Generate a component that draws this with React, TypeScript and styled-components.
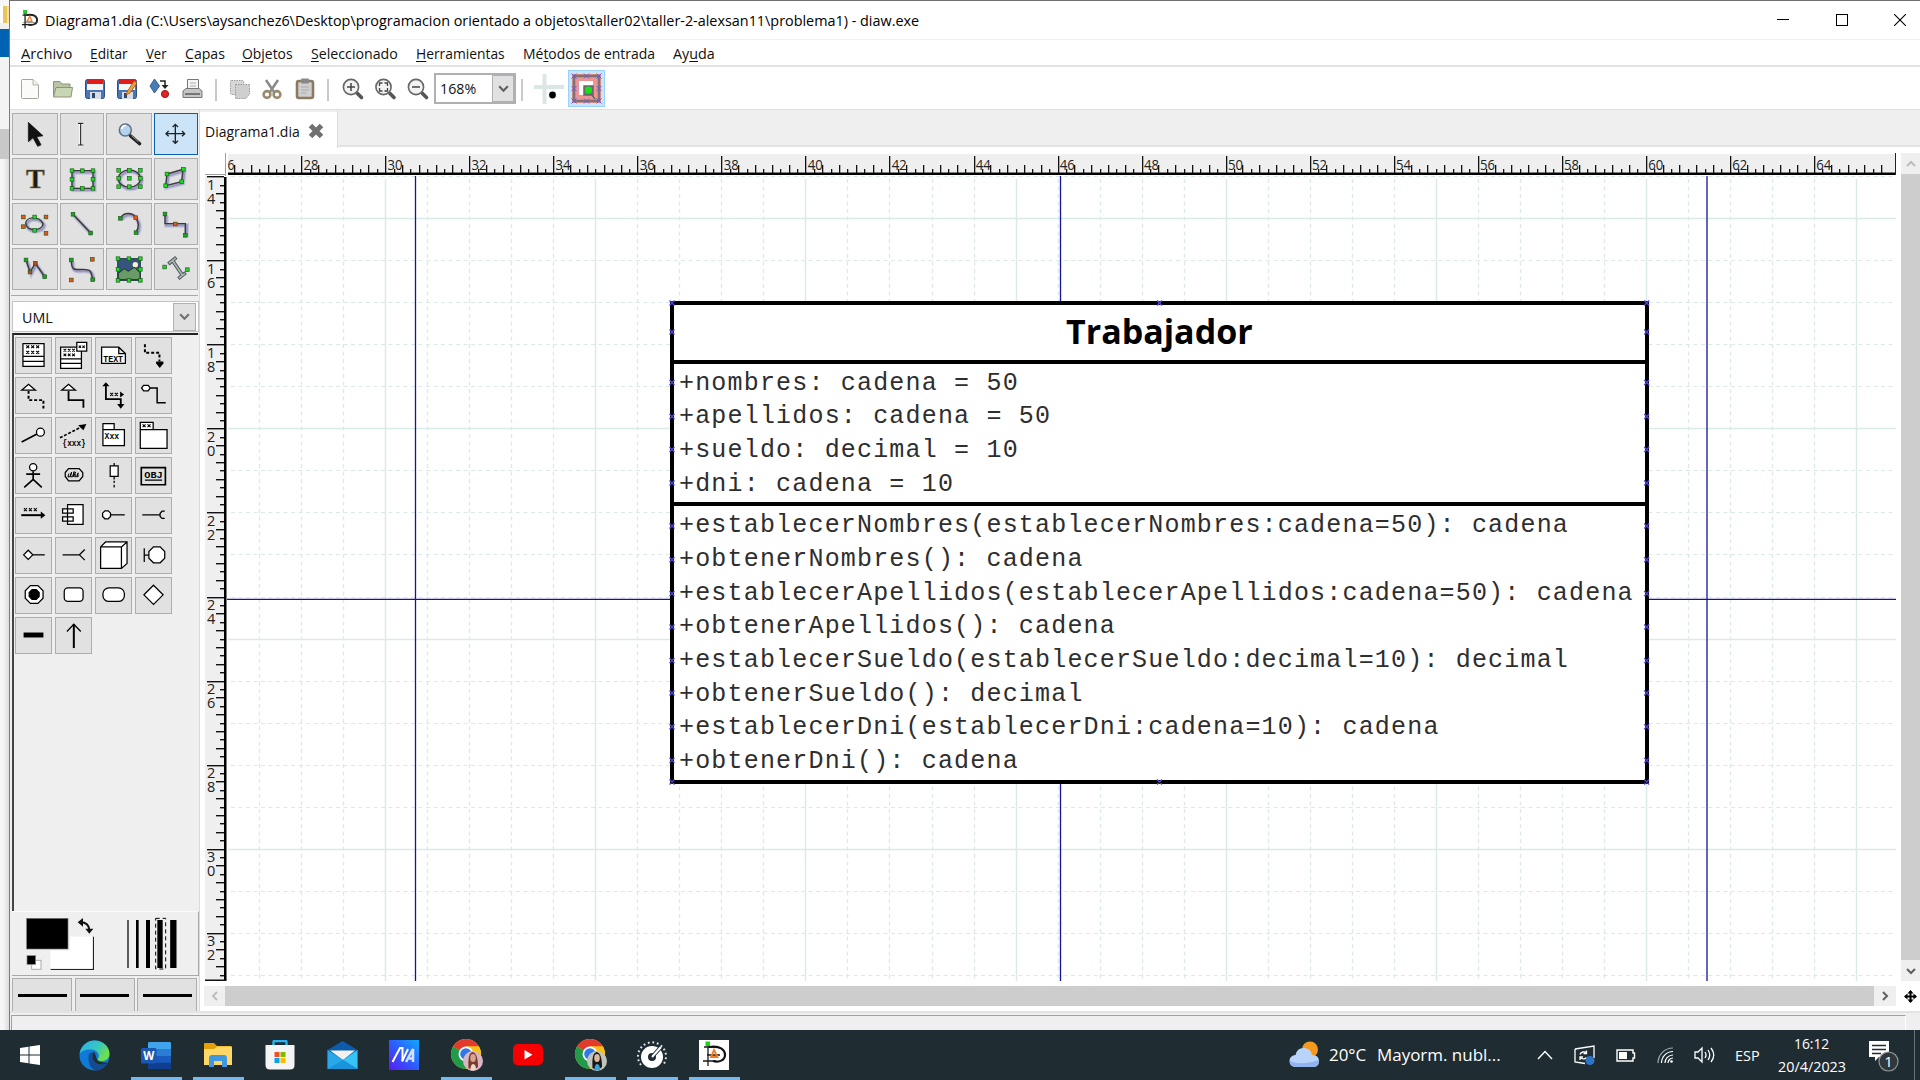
import React, { useLayoutEffect, useRef, useState } from "react";
import styled, { createGlobalStyle } from "styled-components";

const GlobalStyle = createGlobalStyle`
  * { box-sizing: border-box; }
  body { margin: 0; background: #fff; font-family: "Segoe UI", "Open Sans", "Noto Sans", sans-serif; overflow: hidden; }
  svg { display: block; }
`;

/* ---------- text squeezed to a known width ---------- */
const FitBox = styled.span<{ $w: number; $size: number; $bold?: boolean; $color?: string }>`
  display: block;
  width: ${(p) => p.$w}px;
  font-size: ${(p) => p.$size}px;
  line-height: ${(p) => Math.round(p.$size * 1.34)}px;
  font-weight: ${(p) => (p.$bold ? 700 : 400)};
  color: ${(p) => p.$color ?? "#111"};
  white-space: pre;
`;
const FitInner = styled.span`
  display: inline-block;
  transform-origin: 0 50%;
`;
const Mnemonic = styled.span`
  text-decoration: underline;
  text-decoration-thickness: 1px;
  text-underline-offset: 2px;
`;

type FitProps = { w: number; size?: number; bold?: boolean; color?: string; children: React.ReactNode };
function Fit({ w, size = 15, bold, color, children }: FitProps) {
  const ref = useRef<HTMLSpanElement>(null);
  const [scale, setScale] = useState(1);
  useLayoutEffect(() => {
    if (ref.current) setScale(w / ref.current.offsetWidth);
  }, [w]);
  return (
    <FitBox $w={w} $size={size} $bold={bold} $color={color}>
      <FitInner ref={ref} style={{ transform: `scaleX(${scale})` }}>{children}</FitInner>
    </FitBox>
  );
}

/* ---------- frame ---------- */
const Screen = styled.div`
  width: 1920px;
  height: 1080px;
  display: grid;
  grid-template-rows: 1030px 50px;
  overflow: hidden;
`;
const Desktop = styled.div`
  display: grid;
  grid-template-columns: 9px 1911px;
`;
const Behind = styled.div`
  display: flex;
  flex-direction: column;
  background: linear-gradient(90deg, #f6f6f6 0 3px, #dcdcdc 9px);
`;
const Strip = styled.div<{ $h: number; $c: string }>`
  height: ${(p) => p.$h}px;
  background: ${(p) => p.$c};
`;
const Window = styled.div`
  display: flex;
  flex-direction: column;
  border-top: 1px solid #707070;
  border-left: 1px solid #7b7b7b;
  background: #fff;
`;
const TitleBar = styled.div`
  height: 39px;
  flex: none;
  display: flex;
  align-items: center;
  padding: 0 0 1px 10px;
  gap: 6px;
  border-bottom: 1px solid #f0f0f0;
`;
const WindowButtons = styled.div`
  margin-left: auto;
  display: flex;
  gap: 46.5px;
  padding-right: 14px;
`;
const MenuBar = styled.div`
  height: 27px;
  flex: none;
  display: flex;
  align-items: center;
  padding: 0 0 0 11px;
  gap: 18px;
  border-bottom: 2px solid #e3e3e3;
`;
const Toolbar = styled.div`
  height: 43px;
  flex: none;
  display: flex;
  border-bottom: 1px solid #dedede;
`;
const ToolIcons = styled.div`
  width: 424px;
`;
const ZoomBox = styled.div`
  width: 82px;
  height: 31px;
  margin-top: 6px;
  border: 2px solid #b0b0b4;
  display: flex;
  align-items: center;
  justify-content: space-between;
  padding: 0 0 1px 4px;
`;
const DropButton = styled.div<{ $w: number; $h: number }>`
  width: ${(p) => p.$w}px;
  height: ${(p) => p.$h}px;
  background: #e1e1e1;
  border: 1px solid #b0b0b0;
  display: flex;
  align-items: center;
  justify-content: center;
`;
const SnapButton = styled.div`
  width: 37px;
  height: 37px;
  margin: 3px 0 0 4px;
  background: #cce4f7;
  border: 1px solid #99d1ff;
  display: flex;
  align-items: center;
  justify-content: center;
`;
const Body = styled.div`
  height: 901px;
  display: grid;
  grid-template-columns: 190px 1720px;
`;

/* ---------- left panel ---------- */
const Panel = styled.div`
  background: #efefef;
  border-right: 1px solid #dadada;
  padding: 3px 1px 0 2px;
  display: flex;
  flex-direction: column;
`;
const ToolGrid = styled.div`
  display: grid;
  grid-template-columns: 46px 44px 46px 44px;
  grid-auto-rows: 42px;
  column-gap: 2px;
  row-gap: 3px;
`;
const Cell = styled.div<{ $active?: boolean }>`
  background: ${(p) => (p.$active ? "#cce4f7" : "#e1e1e1")};
  box-shadow: inset 0 0 0 1px ${(p) => (p.$active ? "#0b5ea8" : "#adadad")};
  overflow: hidden;
`;
const Rule = styled.div`
  height: 1px;
  margin: 5px 0 5px -1px;
  background: #a8a8a8;
`;
const Combo = styled.div`
  height: 31px;
  flex: none;
  background: #fff;
  border: 1px solid #c4c4c8;
  display: flex;
  align-items: center;
  justify-content: space-between;
  padding-left: 9px;
  padding-right: 2px;
  margin-right: -1px;
`;
const ObjectList = styled.div`
  height: 578px;
  flex: none;
  margin-top: 1px;
  border-top: 2px solid #222;
  border-left: 2px solid #444;
  padding: 2px 0 0 1px;
  display: grid;
  grid-template-columns: repeat(4, 37px);
  grid-auto-rows: 37px;
  align-content: start;
  gap: 3px;
`;
const ColorArea = styled.div`
  height: 65px;
  flex: none;
  margin-right: -1px;
  border-top: 1px solid #fafafa;
  border-bottom: 1px solid #a8a8a8;
  border-right: 1px solid #a8a8a8;
`;
const LineButtons = styled.div`
  height: 34px;
  margin-top: 2px;
  display: grid;
  grid-template-columns: repeat(3, 60px);
  gap: 2.5px;
`;
const LineButton = styled.div`
  background: #e1e1e1;
  border: 1px solid #adadad;
  display: flex;
  align-items: center;
  justify-content: center;
  &::before { content: ""; width: 49px; height: 3px; background: #000; }
`;

/* ---------- document area ---------- */
const Doc = styled.div`
  display: flex;
  flex-direction: column;
`;
const TabStrip = styled.div`
  height: 38px;
  flex: none;
  display: flex;
`;
const Tab = styled.div`
  width: 138px;
  padding: 9px 0 0 5px;
  display: flex;
  gap: 7.5px;
  border-top: 2px solid #efefef;
  border-right: 1px solid #dcdcdc;
`;
const TabClose = styled.svg`
  margin-top: 2px;
`;
const TabRest = styled.div`
  flex: 1;
  background: #efefef;
  border-bottom: 2px solid #e3e3e3;
  margin-bottom: 1px;
`;
const View = styled.div`
  display: grid;
  margin: 5px 0 0 5px;
  grid-template-columns: 22px 1669px 5px 19px;
  grid-template-rows: 23px 805px 5px 20px;
`;
const TopRuler = styled.div`
  grid-column: 1 / span 2;
  grid-row: 1;
`;
const SideRuler = styled.div`
  grid-column: 1;
  grid-row: 2;
`;
const Canvas = styled.div`
  grid-column: 2;
  grid-row: 2;
  position: relative;
  overflow: hidden;
`;
const VScroll = styled.div`
  grid-column: 4;
  grid-row: 1 / span 2;
  display: grid;
  grid-template-rows: 21px 1fr 21px;
`;
const HScroll = styled.div`
  grid-column: 1 / span 2;
  grid-row: 4;
  margin-left: -1px;
  display: grid;
  grid-template-columns: 21px 1fr 22px;
`;
const ScrollEnd = styled.div`
  background: #efefef;
  display: flex;
  align-items: center;
  justify-content: center;
`;
const Thumb = styled.div`
  background: #cdcdcd;
`;
const Corner = styled.div`
  grid-column: 4;
  grid-row: 4;
  display: flex;
  align-items: center;
  justify-content: center;
`;
const StatusBar = styled.div`
  height: 19px;
  flex: none;
  border-top: 2px solid #e3e3e3;
  background: #efefef;
  padding: 2px 14px 0 1px;
`;
const StatusField = styled.div`
  height: 15px;
  border-top: 1px solid #a0a0a0;
  border-left: 1px solid #a0a0a0;
  border-right: 1px solid #fff;
`;

/* ---------- UML class ---------- */
const ClassBox = styled.div`
  position: absolute;
  left: 443px;
  top: 125px;
  width: 979px;
  height: 483px;
  border: 4px solid #000;
  background: #fff;
`;
const ClassName = styled.div`
  height: 59px;
  border-bottom: 4px solid #000;
  display: flex;
  justify-content: center;
  padding-top: 3px;
`;
const Members = styled.div<{ $h: number; $last?: boolean; $top: number }>`
  height: ${(p) => p.$h}px;
  border-bottom: ${(p) => (p.$last ? 0 : 4)}px solid #000;
  padding: ${(p) => p.$top}px 0 0 5px;
`;
const Member = styled.div`
  font-family: "Courier New", "Liberation Mono", monospace;
  font-size: 25px;
  letter-spacing: 1.18px;
  line-height: 33.72px;
  color: #2e2e2e;
  white-space: pre;
`;
const Overlay = styled.svg`
  position: absolute;
  left: 0;
  top: 0;
`;

/* ---------- taskbar ---------- */
const Taskbar = styled.div`
  background: #1f2d33;
  display: flex;
`;
const Apps = styled.div`
  display: flex;
  width: 1289px;
`;
const TaskButton = styled.div<{ $open?: boolean }>`
  width: 62px;
  height: 50px;
  padding: 0 5px 0 7px;
  display: flex;
  justify-content: center;
  align-items: center;
  background: linear-gradient(${(p) => (p.$open ? "#76b9ed, #76b9ed" : "transparent, transparent")}) 7px 47px / 51px 3px no-repeat;
  &:first-child { padding: 0 7px 0 5px; }
`;
const Tray = styled.div`
  display: flex;
  align-items: center;
`;
const Gap = styled.div<{ $w: number }>`
  width: ${(p) => p.$w}px;
  flex: none;
`;
const Clock = styled.div`
  width: 68px;
  height: 50px;
  display: flex;
  flex-direction: column;
  align-items: center;
  padding-top: 3px;
  gap: 3px;
`;
const ShowDesktop = styled.div`
  width: 6px;
  height: 50px;
  border-left: 1px solid #68737a;
`;

/* ---------- small drawing helpers ---------- */
const Chevron = ({ dir, color = "#606060", s = 12 }: { dir: "up" | "down" | "left" | "right"; color?: string; s?: number }) => {
  const d = { up: "M2 8L6 4L10 8", down: "M2 4L6 8L10 4", left: "M8 2L4 6L8 10", right: "M4 2L8 6L4 10" }[dir];
  return <svg width={s} height={s} viewBox="0 0 12 12"><path d={d} fill="none" stroke={color} strokeWidth="2" /></svg>;
};
const Crosses = ({ x, y, n, s = 9, gap = 15 }: { x: number; y: number; n: number; s?: number; gap?: number }) => (
  <path
    d={Array.from({ length: n }, (_, i) => `M${x + i * gap} ${y}l${s} ${s}m0 ${-s}l${-s} ${s}`).join("")}
    stroke="#000" strokeWidth="3.2" fill="none"
  />
);
const Dots = ({ pts, c = "#19e01c" }: { pts: number[][]; c?: string }) => (
  <>
    {pts.map(([x, y], i) => (
      <rect key={i} x={x - 5.5} y={y - 5.5} width="11" height="11" fill={c} stroke="#1c5a1c" strokeWidth="2" />
    ))}
  </>
);
const RED = "#f0521a";
const DG = "#18a51c";
const Wire = ({ d }: { d: string }) => (
  <>
    <path d={d} transform="translate(4 5)" fill="none" stroke="#5a5ab8" strokeOpacity=".2" strokeWidth="14" />
    <path d={d} transform="translate(4 5)" fill="none" stroke="#4a4a98" strokeOpacity=".35" strokeWidth="7" />
    <path d={d} fill="none" stroke="#3a3a3a" strokeWidth="4.2" />
  </>
);
const DiaLogo = ({ s }: { s: number }) => (
  <svg width={s} height={s} viewBox="0 0 30 30">
    <path d="M8 3V29M3 23H16M4 8H16" stroke="#1a1a1a" strokeWidth="2" fill="none" />
    <path d="M10 8C21 6 27 10 27 16C27 22 20 25 13 23" stroke="#222" strokeWidth="3" fill="none" />
    <path d="M11 18L15.5 10L19 18Z" fill="none" stroke="#f47a24" strokeWidth="2" />
    <path d="M5 20H27" stroke="#444" strokeWidth="1" />
    <rect x="5.5" y=".5" width="5.5" height="5.5" fill="#12d812" stroke="#127a12" strokeWidth=".6" />
  </svg>
);

/* Drawing tools: 3 units per pixel */
const tools: React.ReactNode[] = [
  <><path d="M51 33V90L64 78L78 103L88 98L76 74L94 70Z" fill="#999" opacity=".5" /><path d="M48 28V86L62 74L76 100L86 95L73 71L92 68Z" fill="#111" stroke="#111" strokeWidth="2" /></>,
  <><path d="M53 31H60L61 33L62 31H69M61 33V94M53 96H60L61 94L62 96H69" stroke="#fff" strokeWidth="8" fill="none" /><path d="M53 31H60L61 33L62 31H69M61 33V94M53 96H60L61 94L62 96H69" stroke="#222" strokeWidth="3.4" fill="none" /></>,
  <><path d="M72 68L100 92" stroke="#222" strokeWidth="10" strokeLinecap="round" /><path d="M75 68L96 86" stroke="#999" strokeWidth="3" /><circle cx="57" cy="51" r="18" fill="#b5d2ee" stroke="#5f6f80" strokeWidth="4.5" /><path d="M46 48A12 12 0 0 1 59 38" stroke="#fff" strokeWidth="5" fill="none" /></>,
  <g stroke="#222" strokeWidth="4" fill="none"><path d="M63 35V90M36 62H90" /><path d="M55 42L63 34L71 42M55 83L63 91L71 83M43 54L35 62L43 70M83 54L91 62L83 70" /></g>,
  <text x="69" y="91" textAnchor="middle" fontFamily="Liberation Serif, serif" fontWeight="700" fontSize="84" fill="#1c1a18" stroke="#8a7a48" strokeWidth="2">T</text>,
  <><Wire d="M35 38H98V91H35Z" /><Dots pts={[[35, 38], [66, 38], [98, 38], [35, 64], [98, 64], [35, 91], [66, 91], [98, 91]]} /></>,
  <><Wire d="M36 62A33 26 0 1 0 102 62A33 26 0 1 0 36 62" /><Dots pts={[[37, 37], [69, 37], [102, 37], [37, 61], [69, 61], [102, 61], [37, 86], [69, 86], [102, 86]]} /></>,
  <><Wire d="M38 48L86 34L82 71L34 83Z" /><Dots pts={[[38, 48], [87, 34], [82, 71], [34, 83]]} /></>,
  <><Wire d="M40 62C40 40 80 38 92 62C92 84 45 88 40 62Z" /><Dots pts={[[67, 42], [67, 82]]} /><Dots c={RED} pts={[[33, 42], [101, 42], [33, 71], [101, 91]]} /></>,
  <><Wire d="M38 34L91 90" /><Dots c={DG} pts={[[38, 34], [91, 90]]} /></>,
  <><Wire d="M42 46C52 26 80 28 88 44C100 60 97 75 89 89" /><Dots c={DG} pts={[[42, 46], [89, 89]]} /><Dots c={RED} pts={[[88, 44]]} /></>,
  <><Wire d="M32 33V62H93V97" /><Dots c={DG} pts={[[32, 33], [93, 97]]} /><Dots c={RED} pts={[[63, 63]]} /></>,
  <><Wire d="M41 36L53 72L69 46L97 86" /><Dots c={DG} pts={[[41, 36], [97, 86]]} /><Dots c="#c2441c" pts={[[53, 72], [69, 46]]} /></>,
  <><Wire d="M33 36C33 72 45 64 68 64C94 64 92 72 97 95" /><Dots c={DG} pts={[[33, 36], [97, 95]]} /><Dots c={RED} pts={[[96, 34], [33, 96]]} /></>,
  <><rect x="34" y="32" width="68" height="65" fill="#35557e" stroke="#26334a" strokeWidth="3" /><circle cx="87" cy="50" r="8" fill="#f5f3d0" /><path d="M36 76L54 62L66 70L84 58L101 74V95H36Z" fill="#6a9a66" stroke="#1c3a2a" strokeWidth="3" /><Dots pts={[[35, 32], [68, 32], [102, 32], [35, 64], [102, 64], [35, 97], [68, 97], [102, 97]]} /></>,
  <><path d="M54 37L86 84M42 48L66 28M72 92L94 74" stroke="#4f5a5a" strokeWidth="11" /><path d="M54 37L86 84M44 46L64 30M74 90L92 76" stroke="#a8b4b4" strokeWidth="5" /><Dots c="#32c83c" pts={[[31, 57], [99, 65]]} /></>,
];

/* UML shapes: 3 units per pixel */
const oct = (cx: number, cy: number, r: number) => {
  const k = r * 0.42;
  return `M${cx - k} ${cy - r}H${cx + k}L${cx + r} ${cy - k}V${cy + k}L${cx + k} ${cy + r}H${cx - k}L${cx - r} ${cy + k}V${cy - k}Z`;
};
const tiny = { fontFamily: "Liberation Mono, monospace", fontWeight: 700, fill: "#000", stroke: "none", lengthAdjust: "spacingAndGlyphs" as const };
const shapes: React.ReactNode[] = [
  <><path d="M24 20H88V89H24ZM24 59H88M24 74H88" /><Crosses x={34} y={25} n={3} /><Crosses x={34} y={42} n={3} /></>,
  <><path d="M17 31H80V95H17ZM17 66H80M17 80H80" /><Crosses x={26} y={36} n={3} s={8} gap={13} /><Crosses x={26} y={50} n={3} s={8} gap={13} /><path d="M66 16H96V43H66Z" /><Crosses x={72} y={26} n={2} s={7} gap={11} /></>,
  <><path d="M20 31H72L92 50V80H20ZM72 31V50H92" /><text x="55" y="75" textAnchor="middle" fontSize="29" textLength="60" {...tiny}>TEXT</text></>,
  <><path d="M30 22V48H74V74" strokeWidth="6" strokeDasharray="9 6" fill="none" /><path d="M64 74H86V80L75 94L64 80Z" fill="#000" stroke="none" /></>,
  <><path d="M41 42V70H86V95" strokeWidth="6" strokeDasharray="9 6" fill="none" /><path d="M20 40L41 22L62 40Z" /></>,
  <><path d="M41 42V70H86V93" strokeWidth="5.5" fill="none" /><path d="M20 40L41 22L62 40Z" /></>,
  <><path d="M33 25V67H78V90" strokeWidth="5.5" fill="none" /><path d="M22 28L33 16L44 28ZM67 82L78 96L89 82ZM76 44L88 53L76 62Z" fill="#000" stroke="none" /><Crosses x={46} y={48} n={2} gap={14} /></>,
  <><path d="M46 33H67V78H93" strokeWidth="4.5" fill="none" /><path d="M20 33L26 25H40L46 33L40 42H26Z" /></>,
  <><path d="M20 76L68 51" strokeWidth="5" /><circle cx="77" cy="46" r="12" /></>,
  <><path d="M15 63L78 31" strokeWidth="5" strokeDasharray="9 5" /><path d="M70 25L95 21L86 40Z" fill="#000" stroke="none" /><text x="58" y="88" textAnchor="middle" fontSize="28" textLength="70" {...tiny}>{"{xxx}"}</text></>,
  <><path d="M24 20H58V38H24ZM24 38H89V87H24Z" /><text x="51" y="67" textAnchor="middle" fontSize="27" textLength="44" {...tiny}>Xxx</text></>,
  <><path d="M16 16H55V38H16ZM16 38H97V95H16Z" /><Crosses x={23} y={22} n={2} gap={15} /></>,
  <><path d="M34 52H76M55 43V70M28 92L55 68L81 92" strokeWidth="5" fill="none" /><circle cx="55" cy="31" r="11" /></>,
  <><path d="M41 35H73L84 47V59L73 72H41L31 59V47Z" fill="#e1e1e1" /><path d="M42 50L39 60H45L50 46L47 60H53L58 44L56 60L63 45M62 52L60 60H65L70 48L68 60L73 56" strokeWidth="3" fill="none" /></>,
  <><path d="M46 27H70V59H46Z" /><path d="M58 18V27M58 59V68M58 72V79M58 84V92" /></>,
  <><path d="M19 32H92V84H19Z" fill="#e1e1e1" strokeWidth="5" /><text x="56" y="64" textAnchor="middle" fontSize="28" textLength="56" {...tiny}>OBJ</text><path d="M30 70H82" /></>,
  <><Crosses x={27} y={34} n={3} /><path d="M19 55H84" strokeWidth="6" /><path d="M78 44L92 55L78 66Z" fill="#000" stroke="none" /></>,
  <path d="M38 23H85V83H38ZM23 36H55V49H23ZM23 60H55V73H23Z" />,
  <><path d="M47 54H90" /><path d={oct(35, 54, 12)} /></>,
  <path d="M22 54H76M90 43H82L76 49V59L82 65H90" fill="none" />,
  <><path d="M54 54H90" /><path d="M26 54L40 40L54 54L40 68Z" /></>,
  <path d="M23 54H75M90 38L74 54L90 70" fill="none" />,
  <><path d="M17 30L32 15H97V80L80 95H17ZM17 30H80V95M80 30L97 15" /></>,
  <><path d="M28 34V76M28 55H42" /><path d={oct(66, 54, 24)} /></>,
  <><path d={oct(58, 53, 27)} /><path d={oct(58, 53, 15)} fill="#000" /></>,
  <rect x="28" y="33" width="57" height="41" rx="11" />,
  <rect x="24" y="33" width="65" height="41" rx="18" />,
  <path d="M56 25L85 54L56 83L27 54Z" />,
  <rect x="26" y="47" width="60" height="15" fill="#000" stroke="none" />,
  <><path d="M57 22V94" strokeWidth="6" /><path d="M36 44L57 22L78 44" fill="none" /></>,
];

/* ---------- toolbar icons, page pixels ---------- */
const Lens = ({ x, mark }: { x: number; mark: React.ReactNode }) => (
  <g>
    <path d={`M${x + 6} 93L${x + 10.5} 97.5`} stroke="#555" strokeWidth="3.6" strokeLinecap="round" />
    <circle cx={x} cy="87" r="7.6" fill="#f3f4f0" stroke="#666" strokeWidth="1.6" />
    {mark}
  </g>
);
const Floppy = ({ x }: { x: number }) => (
  <g>
    <rect x={x + 0.5} y="79.5" width="19" height="19" rx="2" fill="#4a76b4" stroke="#2d4f83" />
    <rect x={x + 2} y="79" width="16" height="5" fill="#e21b1b" />
    <rect x={x + 2} y="84" width="16" height="6" fill="#f4f4f4" />
    <rect x={x + 5} y="92" width="11" height="7" fill="#d6dde8" />
    <rect x={x + 7} y="93" width="3" height="5" fill="#2b456e" />
  </g>
);
const ToolbarIcons = () => (
  <svg width="424" height="42" viewBox="10 67 424 42">
    <path d="M21.5 80.5Q21.5 79.5 22.5 79.5H33L38.5 85V97.5Q38.5 98.5 37.5 98.5H22.5Q21.5 98.5 21.5 97.5Z" fill="#fbfbf9" stroke="#a5a59d" />
    <path d="M33 79.5V85H38.5" fill="#eee" stroke="#b5b5ad" />
    <path d="M53.5 97V81.5H60L62 84H70V88" fill="#b8c4a4" stroke="#8a9678" />
    <path d="M53.5 97L56 87.5H72.5L71 97Z" fill="#c9d6b4" stroke="#8a9678" />
    <Floppy x={85} />
    <Floppy x={117} />
    <path d="M127 92L134 81L137 83L130 93L126 95Z" fill="#f0a03a" stroke="#9a5a18" strokeWidth=".8" />
    <path d="M150 86L154.5 79L159.5 86L154.5 93Z" fill="#4a7cb8" stroke="#35618f" />
    <path d="M160 81H165V86" stroke="#222" strokeWidth="1.5" fill="none" /><path d="M161.5 85H168.5L165 89Z" fill="#222" />
    <circle cx="165" cy="94" r="3.6" fill="#d92626" stroke="#a31515" />
    <path d="M187.5 90V79.5H198.5V90" fill="#f5f5f5" stroke="#777" />
    <path d="M190 83H196M190 86H196" stroke="#aaa" />
    <path d="M183 97.5V91L186 88.5H199L202 91V97.5Z" fill="#c6c6c4" stroke="#777" /><path d="M185 94H200" stroke="#777" strokeWidth="2" />
    <path d="M216 79V101M328 79V101" stroke="#b8b8b8" strokeWidth="1.5" />
    <g fill="#d7d7d7" stroke="#9a9a9a" strokeDasharray="1.5 1">
      <rect x="230.5" y="80.5" width="13" height="14" rx="1" /><path d="M235.5 84.5H249.5V94L246 98.5H235.5Z" fill="#cfcfcf" />
    </g>
    <path d="M266 80L274 92M278 80L270 92" stroke="#8c8c8c" strokeWidth="2.6" />
    <circle cx="267" cy="94.5" r="3.4" fill="none" stroke="#9a8a70" strokeWidth="2.6" /><circle cx="277" cy="94.5" r="3.4" fill="none" stroke="#9a8a70" strokeWidth="2.6" />
    <rect x="297" y="81" width="16" height="17" rx="2" fill="#cfcfcf" stroke="#8b7a60" strokeWidth="2.6" /><rect x="301" y="78.5" width="8" height="5" rx="1" fill="#888" />
    <path d="M301 87H309M301 90H309M301 93H306" stroke="#aaa" />
    <Lens x={351} mark={<path d="M347 87H355M351 83V91" stroke="#444" strokeWidth="1.5" />} />
    <Lens x={383.5} mark={<path d="M379.5 86V83H382.5M384.5 83H387.5V86M387.5 88V91H384.5M382.5 91H379.5V88" stroke="#444" strokeWidth="1.3" fill="none" />} />
    <Lens x={416} mark={<path d="M412 87H420" stroke="#444" strokeWidth="1.5" />} />
  </svg>
);

/* ---------- rulers and grid ---------- */
const UNIT = 42.02;
const px = (u: number) => 302 + (u - 28) * UNIT;
const py = (u: number) => 176.8 + (u - 14) * UNIT;
const isMajor = (i: number) => i % 10 === 0;

const HRuler = () => (
  <svg width="1691" height="23" viewBox="205 153 1691 23">
    <rect x="228" y="154" width="1667" height="18" fill="#efefef" />
    <path d="M225.5 153V176M205 174.5H226" stroke="#a0a0a0" />
    <rect x="228" y="172.5" width="1668" height="2.5" fill="#000" />
    <path d="M1895.5 153V175" stroke="#222" />
    {Array.from({ length: 198 }, (_, k) => k + 131).map((i) => {
      const x = px(i / 5) - 0.8;
      if (x < 230 || x > 1893) return null;
      const y = isMajor(i) ? 156 : i % 2 === 0 ? 165 : 169;
      return <rect key={i} x={Math.round(x)} y={y} width="1.3" height={173 - y} fill="#111" />;
    })}
    <text x="227.5" y="170" fontSize="15" fill="#222" fontFamily="Open Sans, sans-serif" textLength="7" lengthAdjust="spacingAndGlyphs">6</text>
    {Array.from({ length: 19 }, (_, k) => 28 + 2 * k).map((u) => (
      <text key={u} x={px(u) + 1.5} y="170" fontSize="15" fill="#222" fontFamily="Open Sans, sans-serif" textLength="15" lengthAdjust="spacingAndGlyphs">{u}</text>
    ))}
  </svg>
);
const VRuler = () => (
  <svg width="22" height="805" viewBox="205 176 22 805">
    <rect x="205" y="176" width="19" height="804" fill="#efefef" />
    <rect x="224" y="177" width="2.5" height="803" fill="#000" />
    <rect x="205" y="979.5" width="21.5" height="1.5" fill="#111" />
    {Array.from({ length: 96 }, (_, k) => k + 70).map((i) => {
      const y = py(i / 5) - 0.5;
      if (y > 979) return null;
      const x = isMajor(i) ? 207 : i % 2 === 0 ? 216 : 220;
      return <rect key={i} x={x} y={Math.round(y)} width={224 - x} height="1.4" fill="#111" />;
    })}
    {Array.from({ length: 10 }, (_, k) => 14 + 2 * k).map((u) => (
      <g key={u} fontSize="14.5" fill="#222" fontFamily="Open Sans, sans-serif">
        <text x="207" y={py(u) + 13}>{String(u)[0]}</text>
        <text x="207" y={py(u) + 27}>{String(u)[1]}</text>
      </g>
    ))}
  </svg>
);
const Grid = () => (
  <svg width="1669" height="805" viewBox="227 176 1669 805">
    <g stroke="#dbe9e7">
      {Array.from({ length: 39 }, (_, k) => k + 27).map((u) => (
        <path key={`v${u}`} d={`M${Math.round(px(u) - 0.8) + 0.5} 179V981`} strokeWidth={u % 5 ? 1.3 : 1.5} strokeDasharray={u % 5 ? "4 3.5" : undefined} />
      ))}
      {Array.from({ length: 20 }, (_, k) => k + 14).map((u) => (
        <path key={`h${u}`} d={`M${u % 5 ? 231 : 228} ${Math.round(py(u) - 0.5) + 0.5}H1896`} strokeWidth={u % 5 ? 1.2 : 1.3} strokeDasharray={u % 5 ? "4 3.5" : undefined} />
      ))}
    </g>
    <path d="M415.5 176V981M1060.5 176V981M1707 176V981M227 599.3H1896" stroke="#1414a0" strokeWidth="1.3" />
  </svg>
);
const sideMarks = [303, 332, 382.5, 416.5, 449.5, 483, 526, 559.7, 593.6, 627, 660.6, 693, 726.7, 760.4, 782];
const mark = (x: number, y: number) => `M${x - 2.5} ${y - 2.5}l5 5m0 -5l-5 5`;
const Marks = () => (
  <Overlay width="1669" height="805" viewBox="227 176 1669 805">
    <path d={sideMarks.map((y) => mark(672, y) + mark(1646.7, y)).join("") + mark(1159.5, 303) + mark(1159.5, 782)} stroke="#4a44e0" strokeWidth="1.3" />
  </Overlay>
);

const attributes = ["+nombres: cadena = 50", "+apellidos: cadena = 50", "+sueldo: decimal = 10", "+dni: cadena = 10"];
const operations = [
  "+establecerNombres(establecerNombres:cadena=50): cadena",
  "+obtenerNombres(): cadena",
  "+establecerApellidos(establecerApellidos:cadena=50): cadena",
  "+obtenerApellidos(): cadena",
  "+establecerSueldo(establecerSueldo:decimal=10): decimal",
  "+obtenerSueldo(): decimal",
  "+establecerDni(establecerDni:cadena=10): cadena",
  "+obtenerDni(): cadena",
];

const menus: [string, string, string, number][] = [
  ["", "A", "rchivo", 51], ["", "E", "ditar", 37.5], ["", "V", "er", 21], ["", "C", "apas", 39.5], ["", "O", "bjetos", 51],
  ["", "S", "eleccionado", 87], ["", "H", "erramientas", 88.5], ["Mé", "t", "odos de entrada", 132], ["Ay", "u", "da", 42],
];

/* ---------- taskbar icons ---------- */
const Chrome = ({ face, hair, bg, shirt }: { face: string; hair: string; bg: string; shirt: string }) => (
  <svg width="34" height="34" viewBox="-1 0 34 34">
    <circle cx="16" cy="16" r="15" fill="#fbc116" />
    <path d="M16 16L3 8.5A15 15 0 0 1 29 8.5H16Z" fill="#e23b2e" />
    <path d="M16 16L3 8.5A15 15 0 0 0 16 31L22.5 20Z" fill="#229a48" />
    <path d="M16 8.5H29A15 15 0 0 1 16 31L22.5 20Z" fill="#fbc116" />
    <circle cx="16" cy="16" r="7.5" fill="#fff" /><circle cx="16" cy="16" r="5.8" fill="#2f79e6" />
    <circle cx="23" cy="23" r="10" fill={bg} />
    <path d="M18.5 30Q17.5 15 22.5 14Q28 15 28 29Q23 34 18.5 30Z" fill={hair} />
    <ellipse cx="23" cy="20" rx="2.8" ry="4" fill={face} />
    <path d="M20.5 32.5Q20.5 26 23 26Q26 26 26 32Z" fill={shirt} />
  </svg>
);
const appIcons: [React.ReactNode, boolean][] = [
  [<svg width="20" height="20" viewBox="0 0 20 20"><path d="M0 3L8.5 1.8V9.5H0ZM9.5 1.6L20 0V9.5H9.5ZM0 10.5H8.5V18.2L0 17ZM9.5 10.5H20V20L9.5 18.4Z" fill="#fff" /></svg>, false],
  [<svg width="31" height="31" viewBox="0 0 31 31">
    <defs><linearGradient id="eg" x1="0" y1="0" x2="1" y2=".5"><stop offset="0" stopColor="#2fb0ee" /><stop offset=".6" stopColor="#35c7c0" /><stop offset="1" stopColor="#70e04a" /></linearGradient></defs>
    <circle cx="15.5" cy="15.5" r="15" fill="#0f7bd6" />
    <path d="M.6 14C2 5 9 .5 15.5 .5C25 .5 30.5 7.5 30.5 13.5C30.5 18.5 26.5 21.5 21.5 21C18 20.5 18.5 19 19.5 17.5C21 14 18 10 12.5 9.5C7 9 2 11 .6 14Z" fill="url(#eg)" />
    <path d="M9.5 18C9 13 13 11.5 15.5 12C12 15 13 22 19 24C23 25.3 26 24 28.5 22.5C26 28 21 30.5 16.5 30.5C12 29 9.5 24 9.5 18Z" fill="#134c93" />
    <path d="M15.5 12C12 15 13 22 19 24C23 25.3 27 24 28.5 22.5C24 23 18 22 17.5 18Z" fill="#1f2d33" />
  </svg>, false],
  [<svg width="30" height="27" viewBox="0 0 30 27"><rect x="7" width="23" height="27" rx="1.5" fill="#2b7cd3" /><path d="M7 1.5Q7 0 8.5 0H28.5Q30 0 30 1.5V7H7Z" fill="#41a5ee" /><rect x="7" y="14" width="23" height="6.5" fill="#185abd" /><path d="M7 20.5H30V25.5Q30 27 28.5 27H8.5Q7 27 7 25.5Z" fill="#103f91" /><rect y="6" width="15.5" height="15.5" rx="1.5" fill="#1b56b0" /><text x="7.7" y="18" textAnchor="middle" fontFamily="Open Sans, sans-serif" fontWeight="700" fontSize="11.5" fill="#fff">W</text></svg>, true],
  [<svg width="28" height="24" viewBox="0 0 28 24"><path d="M0 1Q0 0 1 0H10L13 3H27V22H0Z" fill="#e3a008" /><path d="M0 6H10L13 3.5H28V22H0Z" fill="#ffd766" /><path d="M5 24V15Q5 12 8 12H20Q23 12 23 15V24H18V18H10V24Z" fill="#3f98dd" /></svg>, true],
  [<svg width="30" height="30" viewBox="0 0 30 30"><path d="M8.5 7V2Q8.5 1 9.5 1H20.5Q21.5 1 21.5 2V7" fill="none" stroke="#29b3f0" strokeWidth="2.4" /><path d="M.5 5H29.5V25Q29.5 29.5 25 29.5H5Q.5 29.5 .5 25Z" fill="#f4f4f4" /><rect x="9.5" y="12" width="5" height="5" fill="#f25022" /><rect x="15.5" y="12" width="5" height="5" fill="#7fba00" /><rect x="9.5" y="18" width="5" height="5" fill="#00a4ef" /><rect x="15.5" y="18" width="5" height="5" fill="#ffb900" /></svg>, false],
  [<svg width="31" height="29" viewBox="0 0 31 29"><path d="M.5 9L15.5 0L30.5 9V28H.5Z" fill="#0d5cab" /><path d="M3 9.5H28L16 19Z" fill="#f2f2f2" /><path d="M.5 9L16 19L30.5 28H.5Z" fill="#28a8ea" /><path d="M30.5 9L16 19L30.5 28Z" fill="#36c3f5" /><path d="M16 19L30.5 28H.5Z" fill="#1a93dd" /></svg>, false],
  [<svg width="30" height="30" viewBox="0 0 30 30"><defs><linearGradient id="mg" x1="0" y1="1" x2="1" y2="0"><stop offset="0" stopColor="#5a1cf0" /><stop offset=".5" stopColor="#2e5cff" /><stop offset="1" stopColor="#12a8ff" /></linearGradient></defs><rect width="30" height="30" fill="url(#mg)" /><path d="M3.5 22L11 8H13.5V21" stroke="#fff" strokeWidth="2" fill="none" /><path d="M13 21.5L19 9" stroke="#fff" strokeWidth="2" /><path d="M17 22L24 9V22M20 18.5H24" stroke="#cfe2ff" strokeWidth="2.6" fill="none" /></svg>, false],
  [<Chrome face="#d8a58c" hair="#7a3b2c" bg="#d8b6c4" shirt="#e9d9d0" />, true],
  [<svg width="30" height="22" viewBox="0 0 30 22"><rect width="30" height="21.5" rx="5" fill="#f60002" /><path d="M11.5 6L19.5 10.8L11.5 15.5Z" fill="#fff" /></svg>, false],
  [<Chrome face="#e2b69c" hair="#1b1718" bg="#bfc4bc" shirt="#36a3dc" />, true],
  [<svg width="30" height="30" viewBox="0 0 30 30"><circle cx="15" cy="17" r="7.5" fill="none" stroke="#fff" strokeWidth="7" /><path d="M15 17L23.5 7.5" stroke="#1f2d33" strokeWidth="4" /><path d="M15 17L24 7" stroke="#fff" strokeWidth="2" /><path d="M4 25A14 14 0 1 1 26 25" fill="none" stroke="#dfe4e6" strokeWidth="2" strokeDasharray="1.8 2.7" /></svg>, true],
  [<svg width="30" height="30" viewBox="0 0 30 30"><rect width="30" height="30" fill="#fff" /><path d="M9 3V26M4 21H17M5 7H17M8 15H21" stroke="#1a1a1a" strokeWidth="1.3" fill="none" /><path d="M10 7C21 5 26 10 26 15C26 20 20 23 14 21" stroke="#111" strokeWidth="2.2" fill="none" /><path d="M12 17L15 10L18.5 17Z" fill="none" stroke="#f47a24" strokeWidth="1.8" /><rect x="6.5" y="1.5" width="4.5" height="4.5" fill="#12d812" /></svg>, true],
];

export default function App() {
  return (
    <>
      <GlobalStyle />
      <Screen>
        <Desktop>
          <Behind>
            <Strip $h={6} $c="#f6f6f6" />
            <Strip $h={17} $c="linear-gradient(90deg, #fff 0 3px, #e8c65c 3px 7px, #f4e2a4 7px)" />
            <Strip $h={6} $c="#f0f0f0" />
            <Strip $h={28} $c="#0063b1" />
            <Strip $h={72} $c="#f3f3f3" />
            <Strip $h={30} $c="#c8c8c8" />
          </Behind>
          <Window>
            <TitleBar>
              <DiaLogo s={19} />
              <Fit w={874.5} color="#000">
                {"Diagrama1.dia (C:\\Users\\aysanchez6\\Desktop\\programacion orientado a objetos\\taller02\\taller-2-alexsan11\\problema1) - diaw.exe"}
              </Fit>
              <WindowButtons>
                <svg width="12" height="12"><path d="M0 5.5H12" stroke="#000" /></svg>
                <svg width="12" height="12"><rect x=".5" y=".5" width="11" height="11" fill="none" stroke="#000" /></svg>
                <svg width="12" height="12"><path d="M0 0L12 12M12 0L0 12" stroke="#000" strokeWidth="1.1" /></svg>
              </WindowButtons>
            </TitleBar>
            <MenuBar>
              {menus.map(([a, b, c, w]) => (
                <Fit key={b + c} w={w}>{a}<Mnemonic>{b}</Mnemonic>{c}</Fit>
              ))}
            </MenuBar>
            <Toolbar>
              <ToolIcons><ToolbarIcons /></ToolIcons>
              <ZoomBox>
                <Fit w={36}>168%</Fit>
                <DropButton $w={22} $h={27}><Chevron dir="down" s={13} /></DropButton>
              </ZoomBox>
              <svg width="48" height="42" viewBox="516 67 48 42">
                <path d="M522 79V101" stroke="#b8b8b8" strokeWidth="1.5" />
                <path d="M544.5 74V104M534 87H564" stroke="#dde6e6" strokeWidth="4" />
                <circle cx="552.5" cy="95" r="3.4" fill="#000" />
              </svg>
              <SnapButton>
                <svg width="31" height="31" viewBox="0 0 31 31">
                  <rect x="1" y="1" width="29" height="29" fill="#ee9494" />
                  <rect x="3" y="3" width="25" height="25" fill="none" stroke="#7c7474" strokeWidth="2.6" />
                  <rect x="8" y="8" width="14" height="14" fill="#fff" />
                  <path d="M13 13H22V22H13ZM20 21L24 26" fill="#777" stroke="#666" strokeWidth="1.5" />
                  <circle cx="17.5" cy="17" r="3.5" fill="#16e016" />
                  <path d={[3, 15.5, 28].flatMap((x) => [3, 15.5, 28].filter((y) => x !== 15.5 || y !== 15.5).map((y) => `M${x - 2.5} ${y - 2.5}l5 5m0 -5l-5 5`)).join("")} stroke="#6a5ae0" strokeWidth="1" />
                </svg>
              </SnapButton>
            </Toolbar>
            <Body>
              <Panel>
                <ToolGrid>
                  {tools.map((t, i) => (
                    <Cell key={i} $active={i === 3}><svg width="44" height="42" viewBox="-1 0 132 126">{t}</svg></Cell>
                  ))}
                </ToolGrid>
                <Rule />
                <Combo>
                  <Fit w={30.5}>UML</Fit>
                  <DropButton $w={23} $h={28}><Chevron dir="down" s={13} color="#707070" /></DropButton>
                </Combo>
                <ObjectList>
                  {shapes.map((s, i) => (
                    <Cell key={i}><svg width="37" height="37" viewBox="0 0 112 112"><g fill="#fff" stroke="#000" strokeWidth="3.8">{s}</g></svg></Cell>
                  ))}
                </ObjectList>
                <ColorArea>
                  <svg width="185" height="63" viewBox="36 66 555 189">
                    <path d="M152 140H281V238H152Z" fill="#fff" /><path d="M152 238H280V140" stroke="#222" strokeWidth="4" fill="none" />
                    <rect x="78" y="84" width="132" height="98" fill="#efefef" />
                    <path d="M152 182H210V140H278V236H152Z" fill="#fff" />
                    <rect x="80" y="85" width="124" height="92" fill="#000" stroke="#777" strokeWidth="2" />
                    <rect x="95" y="211" width="28" height="27" fill="#fff" stroke="#aaa" strokeWidth="3" />
                    <rect x="81" y="197" width="26" height="26" fill="#000" stroke="#888" strokeWidth="2" />
                    <path d="M242 97Q266 97 268 120" stroke="#111" strokeWidth="6" fill="none" />
                    <path d="M233 97L249 84V110ZM256 116H280L268 131Z" fill="#111" />
                    <path d="M384 90V234" stroke="#111" strokeWidth="4" /><path d="M412 90V234" stroke="#000" strokeWidth="8" />
                    <path d="M444 90V234" stroke="#000" strokeWidth="12" /><path d="M480 90V234" stroke="#000" strokeWidth="16" />
                    <path d="M520 90V234" stroke="#000" strokeWidth="19" />
                    <rect x="467" y="85" width="30" height="152" fill="none" stroke="#000" strokeWidth="3" strokeDasharray="12 9" />
                  </svg>
                </ColorArea>
                <LineButtons><LineButton /><LineButton /><LineButton /></LineButtons>
              </Panel>
              <Doc>
                <TabStrip>
                  <Tab>
                    <Fit w={95}>Diagrama1.dia</Fit>
                    <TabClose width="16" height="16" viewBox="0 0 16 16"><path d="M2.5 2.5L13.5 13.5M13.5 2.5L2.5 13.5" stroke="#6e716e" strokeWidth="5" /></TabClose>
                  </Tab>
                  <TabRest />
                </TabStrip>
                <View>
                  <TopRuler><HRuler /></TopRuler>
                  <VScroll>
                    <ScrollEnd><Chevron dir="up" color="#bdbdbd" /></ScrollEnd>
                    <Thumb />
                    <ScrollEnd><Chevron dir="down" /></ScrollEnd>
                  </VScroll>
                  <SideRuler><VRuler /></SideRuler>
                  <Canvas>
                    <Grid />
                    <ClassBox>
                      <ClassName><Fit w={187} size={34} bold color="#000">Trabajador</Fit></ClassName>
                      <Members $h={142} $top={2.6}>{attributes.map((a) => <Member key={a}>{a}</Member>)}</Members>
                      <Members $h={274} $top={3.1} $last>{operations.map((o) => <Member key={o}>{o}</Member>)}</Members>
                    </ClassBox>
                    <Marks />
                  </Canvas>
                  <HScroll>
                    <ScrollEnd><Chevron dir="left" color="#bdbdbd" /></ScrollEnd>
                    <Thumb />
                    <ScrollEnd><Chevron dir="right" /></ScrollEnd>
                  </HScroll>
                  <Corner>
                    <svg width="13" height="13" viewBox="0 0 13 13"><path d="M6.5 1V12M1 6.5H12" stroke="#000" strokeWidth="2" /><path d="M6.5 0L9.5 3.5H3.5ZM6.5 13L9.5 9.5H3.5ZM0 6.5L3.5 3.5V9.5ZM13 6.5L9.5 3.5V9.5Z" /></svg>
                  </Corner>
                </View>
              </Doc>
            </Body>
            <StatusBar><StatusField /></StatusBar>
          </Window>
        </Desktop>
        <Taskbar>
          <Apps>
            {appIcons.map(([icon, open], i) => <TaskButton key={i} $open={open}>{icon}</TaskButton>)}
          </Apps>
          <Tray>
            <svg width="31" height="28" viewBox="0 0 31 28">
              <circle cx="21" cy="8.5" r="8" fill="#f59a1e" />
              <path d="M7 26Q0 25.5 .5 19.5Q1 14.5 6.5 14Q8 6.5 15.5 7Q22 7.5 23 14Q30 14 30 20Q30 26 24 26Z" fill="#b9d4fb" />
              <path d="M7 26Q1 25.5 .7 20Q12 25 29.8 19Q30 26 24 26Z" fill="#8fb4f0" />
            </svg>
            <Gap $w={9} />
            <Fit w={37} size={16} color="#fff">20°C</Fit>
            <Gap $w={11} />
            <Fit w={124} size={16} color="#fff">Mayorm. nubl...</Fit>
            <Gap $w={36} />
            <svg width="16" height="10"><path d="M1 9L8 1.5L15 9" fill="none" stroke="#fff" strokeWidth="1.4" /></svg>
            <Gap $w={21} />
            <svg width="22" height="21" viewBox="0 0 22 21"><path d="M1 4L20 1V13M1 4V17L11 18.5" fill="none" stroke="#fff" strokeWidth="1.3" /><path d="M12.5 8A4 4 0 0 0 6 9.5M6 12A4 4 0 0 0 12.5 12.5M12.5 5.5V8.5H9.5M6 15V12H9" fill="none" stroke="#fff" strokeWidth="1.3" /><circle cx="16" cy="15.5" r="4.5" fill="#2d74c4" /></svg>
            <Gap $w={20} />
            <svg width="20" height="13" viewBox="0 0 20 13"><path d="M1 1H17V4H18.5V9H17V12H1Z" fill="none" stroke="#fff" strokeWidth="1.4" /><rect x="3" y="3" width="8" height="7" fill="#fff" /></svg>
            <Gap $w={21} />
            <svg width="17" height="17" viewBox="0 0 17 17" fill="none" stroke="#fff" strokeWidth="1.2"><path d="M1 16A15 15 0 0 1 16 1" opacity=".6" /><path d="M4.5 16A11.5 11.5 0 0 1 16 4.5M8 16A8 8 0 0 1 16 8M11 16A5 5 0 0 1 16 11" /><circle cx="14.5" cy="14.5" r="1.3" fill="#fff" stroke="none" /></svg>
            <Gap $w={20} />
            <svg width="22" height="18" viewBox="0 0 22 18" fill="none" stroke="#fff" strokeWidth="1.3"><path d="M1 6H4L8 2V16L4 12H1Z" /><path d="M11 6Q13 9 11 12M14 4Q17.5 9 14 14M17 2Q22.5 9 17 16" /></svg>
            <Gap $w={19} />
            <Fit w={25} size={15} color="#fff">ESP</Fit>
            <Gap $w={17.5} />
            <Clock>
              <Fit w={35} size={15} color="#fff">16:12</Fit>
              <Fit w={68} size={15} color="#fff">20/4/2023</Fit>
            </Clock>
            <Gap $w={22.5} />
            <svg width="32" height="34" viewBox="1868 1038 32 34">
              <path d="M1869 1041H1889V1057H1879L1875 1061V1057H1869Z" fill="#fff" />
              <path d="M1872 1045.5H1886M1872 1049.5H1886M1872 1053.5H1881" stroke="#1f2d33" strokeWidth="1.4" />
              <circle cx="1888.5" cy="1061.5" r="9.5" fill="#30383c" stroke="#8d9599" strokeWidth="1.2" />
              <text x="1888.5" y="1067" textAnchor="middle" fontFamily="Open Sans, sans-serif" fontSize="15" fill="#fff">1</text>
            </svg>
            <Gap $w={14} />
            <ShowDesktop />
          </Tray>
        </Taskbar>
      </Screen>
    </>
  );
}
